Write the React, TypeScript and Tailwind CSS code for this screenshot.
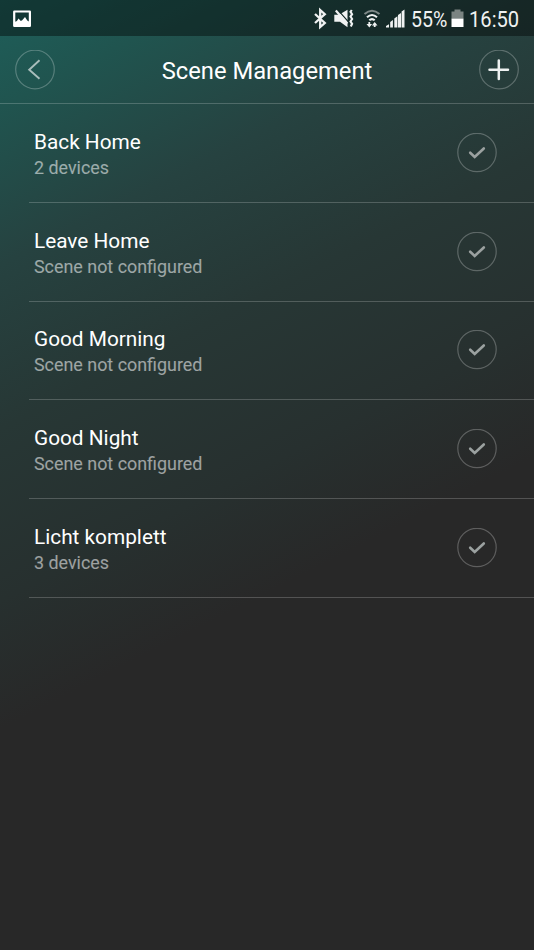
const scenes = [
  { name: 'Back Home', detail: '2 devices' },
  { name: 'Leave Home', detail: 'Scene not configured' },
  { name: 'Good Morning', detail: 'Scene not configured' },
  { name: 'Good Night', detail: 'Scene not configured' },
  { name: 'Licht komplett', detail: '3 devices' },
];

function StatusBar() {
  return (
    <div className="flex h-9 items-center bg-black/40 text-[#f0f2f2]">
      <svg className="ml-[13px] mt-px" width="19" height="18" viewBox="0 0 19 18">
        <path fillRule="evenodd" fill="#fff" d="M1.300 0.500h15.500a1.200 1.200 0 0 1 1.200 1.200v14a1.200 1.200 0 0 1-1.200 1.200H1.300a1.200 1.200 0 0 1-1.200-1.200v-14A1.200 1.200 0 0 1 1.300.500zM2.300 2.500v9.300l1.600-.8 1.600-2.500 2.300 2.500 1.400-.8 2.800-3.200 2.300 3.500 1.500 1V2.500z" />
      </svg>
      <svg className="ml-auto" width="96" height="24" viewBox="312 6 96 24" fill="none" stroke="#f0f2f2">
        <path d="M315 14l9.800 9-4.600 4V10l4.600 4.200L315 23" strokeWidth="2.300" />
        <path d="M334.300 14.800h4.700l8.500-5v17.500l-7.500-5.500h-5.700z" fill="#f0f2f2" stroke="none" />
        <path d="M338 10.200l10.500 11.800" stroke="#142a28" strokeWidth="1.200" />
        <path d="M335.800 10.500l11.500 13" strokeWidth="2.200" />
        <path d="M351.800 10l-1.300 1.800 1.600 2.400-1.600 2.400 1.600 2.400-1.600 2.400 1.600 2.400-1.300 2.700" strokeWidth="2.100" />
        <path d="M364.500 14q7.500-6.600 15 0" stroke="#7f8988" strokeWidth="2" />
        <path d="M367 17.300q5-4.600 10 0M369.300 20.300q2.700-2.500 5.400 0" strokeWidth="2.100" />
        <path d="M369.300 22v4M374.700 27v-3.500" strokeWidth="1.800" />
        <path d="M366.500 24.100h5.600l-2.800 3.400zM371.900 25.500h5.600l-2.800-3.400z" fill="#f0f2f2" stroke="none" />
        <path d="M386 27.500v-1.500l3-1.800v3.300zM390.200 27.500v-5.500l2.700-2v7.500zM394.300 27.500V18.500l3.100-2.200v11.200zM398 27.500V15l3-2v14.500zM401.600 27.500V11.600l2.900-2v17.900z" fill="#f0f2f2" stroke="none" />
      </svg>
      <span className="ml-[3px] mt-[2px] inline-block w-[36px] whitespace-nowrap text-[22.500px] leading-6"><span className="inline-block origin-left scale-x-[0.87]">55%</span></span>
      <svg className="ml-[4px]" width="13" height="19" viewBox="0 0 13 19">
        <path d="M3.500 0.500h6v2H12.500v7H.500v-7h3z" fill="#7b8482" />
        <path d="M.500 9.500H12.500v8.500H.500z" fill="#fff" />
      </svg>
      <span className="ml-[5px] mr-[15px] mt-[2px] inline-block w-[50px] whitespace-nowrap text-[22.500px] leading-6"><span className="inline-block origin-left scale-x-[0.895]">16:50</span></span>
    </div>
  );
}

function Header() {
  return (
    <header className="flex h-[68px] items-center justify-between border-b border-white/20 px-[15px]">
      <button className="flex size-10 items-center justify-center">
        <svg width="40" height="40" viewBox="0 0 40 40" fill="none">
          <circle cx="20" cy="19.500" r="19.300" stroke="#fff" strokeOpacity=".25" strokeWidth="1.200" />
          <path d="M24.500 10.300L14.200 19.800l10.300 9" stroke="#a9bdbb" strokeWidth="1.900" />
        </svg>
      </button>
      <h1 className="mt-[2px] text-[23.750px] leading-7 text-white">Scene Management</h1>
      <button className="flex size-10 items-center justify-center">
        <svg width="40" height="40" viewBox="0 0 40 40" fill="none">
          <circle cx="20" cy="19.500" r="19.300" stroke="#fff" strokeOpacity=".25" strokeWidth="1.200" />
          <path d="M10.500 19.700h18.500M19.800 10.500v18.500" stroke="#eef1f1" strokeWidth="2.500" strokeLinecap="round" />
        </svg>
      </button>
    </header>
  );
}

export default function App() {
  return (
    <div className="h-[950px] w-[534px] overflow-hidden bg-[linear-gradient(153deg,#1e5f5a_0px,#20544f_96px,#264240_236px,#273735_382px,#27302f_535px,#282828_650px)] font-['Roboto',sans-serif]">
      <StatusBar />
      <Header />
      <ul>
        {scenes.map((scene) => (
          <li key={scene.name} className="ml-[29.400px] flex h-[98.750px] items-center justify-between border-b border-white/20 pl-[4.600px] pr-[37px]">
            <div className="mt-[4px]">
              <div className="text-[20.800px] leading-[26px] text-white">{scene.name}</div>
              <div className="text-[17.900px] leading-[26px] text-white/55">{scene.detail}</div>
            </div>
            <svg className="shrink-0" width="40" height="40" viewBox="0 0 40 40" fill="none">
              <circle cx="20" cy="19.500" r="19.200" stroke="#fff" strokeOpacity=".25" strokeWidth="1.200" />
              <path d="M13.200 19.700l4.500 4.200L26.800 15.500" stroke="#9ba1a0" strokeWidth="2.600" strokeLinecap="round" />
            </svg>
          </li>
        ))}
      </ul>
    </div>
  );
}
